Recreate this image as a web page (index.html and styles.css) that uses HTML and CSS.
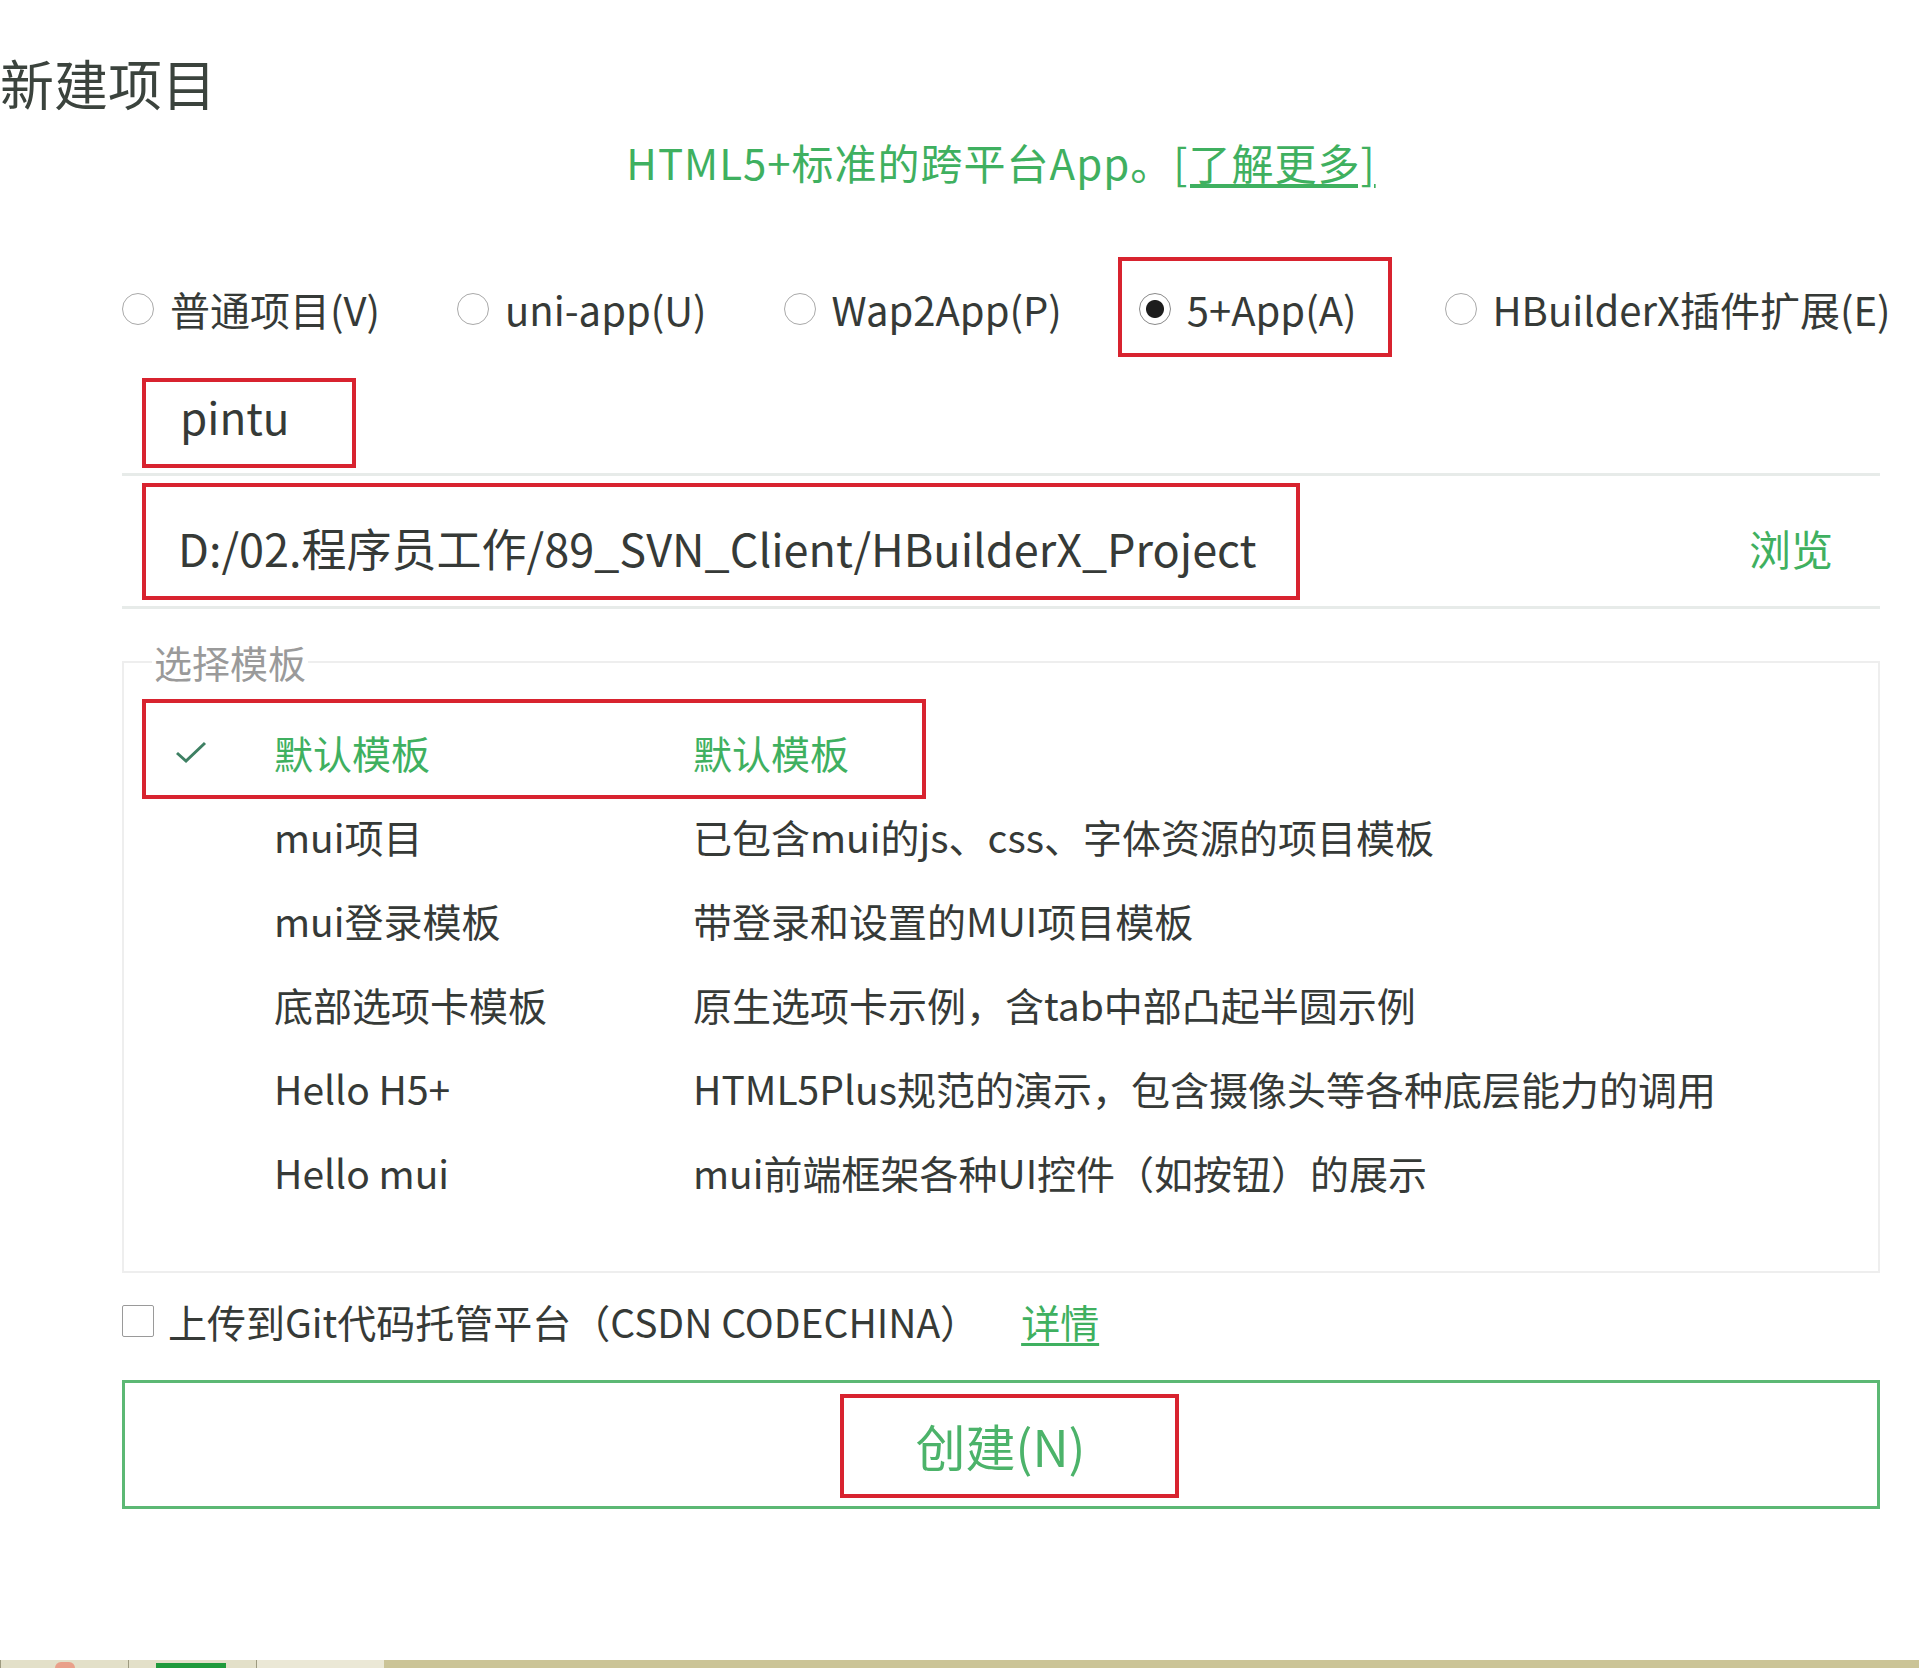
FILE: index.html
```html
<!DOCTYPE html>
<html lang="zh-CN">
<head>
  <meta charset="UTF-8">
  <meta name="viewport" content="width=device-width, initial-scale=1.0">
  <title>新建项目</title>
  <link rel="stylesheet" href="styles.css">
</head>
<body>
  <div class="dialog">
    <h1 class="title">新建项目</h1>
    <div class="content">
      <p class="intro">HTML5+标准的跨平台App。<a href="#">[了解更多]</a></p>

      <div class="types">
        <label class="type"><span class="radio"></span>普通项目(V)</label>
        <label class="type"><span class="radio"></span>uni-app(U)</label>
        <label class="type"><span class="radio"></span>Wap2App(P)</label>
        <label class="type is-checked mark-type"><span class="radio"></span>5+App(A)</label>
        <label class="type"><span class="radio"></span>HBuilderX插件扩展(E)</label>
      </div>

      <div class="field field-name">
        <span class="name-box">pintu</span>
      </div>

      <div class="field field-path">
        <span class="path-box">D:/02.程序员工作/89_SVN_Client/HBuilderX_Project</span>
        <a class="browse" href="#">浏览</a>
      </div>

      <fieldset class="templates">
        <legend>选择模板</legend>
        <div class="tpl is-selected">
          <span class="tick">
            <svg width="32" height="24" viewBox="0 0 32 24"><polyline points="2,13 11,21 30,3" fill="none" stroke="#3e8063" stroke-width="3"/></svg>
          </span>
          <span class="tpl-name">默认模板</span>
          <span class="tpl-desc">默认模板</span>
        </div>
        <div class="tpl">
          <span class="tick"></span>
          <span class="tpl-name">mui项目</span>
          <span class="tpl-desc">已包含mui的js、css、字体资源的项目模板</span>
        </div>
        <div class="tpl">
          <span class="tick"></span>
          <span class="tpl-name">mui登录模板</span>
          <span class="tpl-desc">带登录和设置的MUI项目模板</span>
        </div>
        <div class="tpl">
          <span class="tick"></span>
          <span class="tpl-name">底部选项卡模板</span>
          <span class="tpl-desc">原生选项卡示例，含tab中部凸起半圆示例</span>
        </div>
        <div class="tpl">
          <span class="tick"></span>
          <span class="tpl-name">Hello H5+</span>
          <span class="tpl-desc">HTML5Plus规范的演示，包含摄像头等各种底层能力的调用</span>
        </div>
        <div class="tpl">
          <span class="tick"></span>
          <span class="tpl-name">Hello mui</span>
          <span class="tpl-desc">mui前端框架各种UI控件（如按钮）的展示</span>
        </div>
      </fieldset>

      <label class="git">
        <span class="checkbox"></span>上传到Git代码托管平台（CSDN CODECHINA）<a href="#">详情</a>
      </label>

      <button class="create" type="button"><span class="create-label">创建(N)</span></button>
    </div>

    <div class="taskbar">
      <span class="task task-first"><i class="task-dot"></i></span>
      <span class="task task-active"><i class="task-bar"></i></span>
      <span class="task task-light"></span>
    </div>
  </div>
</body>
</html>
```

FILE: styles.css
```css
* {
  font-family: "Noto Sans CJK SC", "Noto Sans", sans-serif;
  box-sizing: border-box;
}

body {
  margin: 0;
  background: #ffffff;
  color: #363a37;
}

a {
  color: #3fb060;
}

.dialog {
  padding-top: 51px;
}

.title {
  margin: 0;
  font-size: 54px;
  line-height: 64px;
  font-weight: normal;
  color: #3b433d;
}

.content {
  margin-left: 122px;
  width: 1758px;
}

.intro {
  margin: 22px 0 0;
  font-size: 42px;
  line-height: 50px;
  letter-spacing: 1px;
  text-align: center;
  color: #3fb060;
}

.intro a {
  text-decoration: underline;
  text-underline-offset: 4px;
}

/* project type radios */
.types {
  margin-top: 90px;
  height: 64px;
  display: flex;
  align-items: center;
  gap: 77px;
  white-space: nowrap;
}

.type {
  display: flex;
  align-items: center;
  flex-shrink: 0;
  gap: 16px;
  font-size: 40px;
  line-height: 64px;
  position: relative;
}

.radio {
  width: 32px;
  height: 32px;
  border: 1.5px solid #a9a9a9;
  border-radius: 50%;
  background: #fff;
  flex-shrink: 0;
}

.type.is-checked .radio {
  border-color: #8a8a8a;
  background: radial-gradient(circle, #1d1d1d 0 8.5px, #fff 9.5px);
}

.mark-type {
  margin-right: 11px;
}

.mark-type::after {
  content: "";
  position: absolute;
  left: -21px;
  right: -35px;
  top: -20px;
  bottom: -16px;
  border: 4px solid #d8232f;
}

/* name / location */
.field {
  border-bottom: 3px solid #e7ebe9;
}

.field-name {
  padding: 37px 0 5px;
}

.name-box {
  display: inline-block;
  margin-left: 20px;
  width: 214px;
  height: 90px;
  border: 4px solid #d8232f;
  padding-left: 34px;
  font-size: 44px;
  line-height: 68px;
}

.field-path {
  padding: 7px 47px 6px 0;
  display: flex;
  align-items: center;
  justify-content: space-between;
}

.path-box {
  display: flex;
  align-items: center;
  margin-left: 20px;
  width: 1158px;
  height: 117px;
  border: 4px solid #d8232f;
  padding: 12px 0 0 32px;
  font-size: 45px;
  white-space: nowrap;
}

.browse {
  font-size: 42px;
  padding-top: 12px;
  text-decoration: none;
}

/* template list */
.templates {
  margin: 34px 0 0;
  padding: 29px 0 57px;
  border: 2px solid #eeeeee;
  min-width: 0;
}

.templates legend {
  margin-left: 28px;
  padding: 0 2px;
  font-size: 38px;
  line-height: 38px;
  color: #9a9a9a;
}

.tpl {
  position: relative;
  display: grid;
  grid-template-columns: 150px 419px 1fr;
  align-items: center;
  height: 84px;
  font-size: 39px;
}

.tick {
  padding-left: 51px;
  display: flex;
  align-items: center;
}

.tpl.is-selected {
  color: #3fb060;
}

.tpl.is-selected::after {
  content: "";
  position: absolute;
  left: 18px;
  width: 776px;
  top: -11px;
  height: 92px;
  border: 4px solid #d8232f;
}

/* git upload */
.git {
  margin-top: 23px;
  height: 50px;
  display: flex;
  align-items: center;
  gap: 14px;
  font-size: 39px;
}

.checkbox {
  width: 32px;
  height: 32px;
  border: 1.5px solid #9a9a9a;
  border-radius: 2px;
  flex-shrink: 0;
}

.git a {
  margin-left: 28px;
  text-underline-offset: 5px;
}

/* create button */
.create {
  display: block;
  margin-top: 34px;
  width: 100%;
  height: 129px;
  border: 3px solid #5cb874;
  background: #ffffff;
  padding: 0 0 0 17px;
  cursor: pointer;
}

.create-label {
  display: inline-block;
  width: 339px;
  height: 104px;
  margin-top: 2px;
  border: 4px solid #d8232f;
  padding-right: 18px;
  font-size: 50px;
  line-height: 94px;
  color: #4cb36a;
  text-align: center;
}

/* bottom strip of the window */
.taskbar {
  margin-top: 151px;
  height: 8px;
  display: flex;
  background: #cbc497;
}

.task {
  position: relative;
  width: 128px;
  border-left: 1px solid #9d9a80;
  background: #e3e0c9;
}

.task-light {
  background: #ebe8d6;
}

.task-dot {
  position: absolute;
  left: 54px;
  top: 2px;
  width: 20px;
  height: 6px;
  border-radius: 10px 10px 0 0;
  background: #e9a08a;
}

.task-bar {
  position: absolute;
  left: 27px;
  top: 3px;
  width: 70px;
  height: 5px;
  background: #1f9a3c;
}
```
